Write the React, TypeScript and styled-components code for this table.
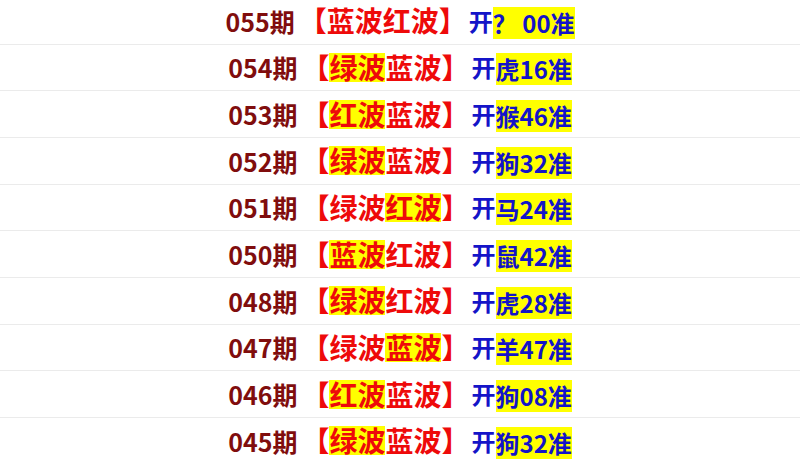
import React from 'react'
import styled, { createGlobalStyle } from 'styled-components'

const GlobalStyle = createGlobalStyle`
  html, body {
    margin: 0;
    padding: 0;
    background: #ffffff;
  }
  body {
    font-family: "Noto Sans CJK SC", "Noto Sans", sans-serif;
  }
`

const List = styled.div`
  width: 800px;
  height: 462px;
  overflow: hidden;
  display: flex;
  flex-direction: column;
  margin-top: -2px;
`

const Row = styled.div`
  height: 45.67px;
  flex: none;
  border-bottom: 1px solid #ebebeb;
  display: flex;
  align-items: center;
  justify-content: center;
  font-size: 24px;
  font-weight: 700;
  white-space: pre;
`

const Issue = styled.span`
  color: #800d0d;
  font-size: 25px;
  margin-right: 4px;
`

const Wave = styled.span<{ $hl?: boolean }>`
  color: #ee0a0a;
  font-size: 28px;
  display: inline-block;
  height: 29px;
  line-height: 29px;
  background: ${p => (p.$hl ? '#ffff00' : 'transparent')};
`

const Bracket = styled.span`
  color: #ee0a0a;
  font-size: 28px;
  line-height: 29px;
`

const Open = styled.span`
  color: #1414c8;
  margin-left: 2px;
  line-height: 32px;
`

const Result = styled.span`
  color: #1414c8;
  display: inline-block;
  height: 32px;
  line-height: 32px;
  margin-top: 4px;
  background: #ffff00;
`

type Item = {
  no: string
  waves: [string, string]
  hl: number
  result: string
}

const items: Item[] = [
  { no: '055', waves: ['蓝波', '红波'], hl: -1, result: '？ 00' },
  { no: '054', waves: ['绿波', '蓝波'], hl: 0, result: '虎16' },
  { no: '053', waves: ['红波', '蓝波'], hl: 0, result: '猴46' },
  { no: '052', waves: ['绿波', '蓝波'], hl: 0, result: '狗32' },
  { no: '051', waves: ['绿波', '红波'], hl: 1, result: '马24' },
  { no: '050', waves: ['蓝波', '红波'], hl: 0, result: '鼠42' },
  { no: '048', waves: ['绿波', '红波'], hl: 0, result: '虎28' },
  { no: '047', waves: ['绿波', '蓝波'], hl: 1, result: '羊47' },
  { no: '046', waves: ['红波', '蓝波'], hl: 0, result: '狗08' },
  { no: '045', waves: ['绿波', '蓝波'], hl: 0, result: '狗32' },
]

const App = () => {
  return (
    <>
      <GlobalStyle />
      <List>
        {items.map(it => (
          <Row key={it.no}>
            <Issue>{it.no}期</Issue>
            <Bracket>【</Bracket>
            {it.waves.map((w, i) => (
              <Wave key={i} $hl={it.hl === i}>{w}</Wave>
            ))}
            <Bracket>】</Bracket>
            <Open>开</Open>
            <Result>{it.result}准</Result>
          </Row>
        ))}
      </List>
    </>
  )
}

export default App
